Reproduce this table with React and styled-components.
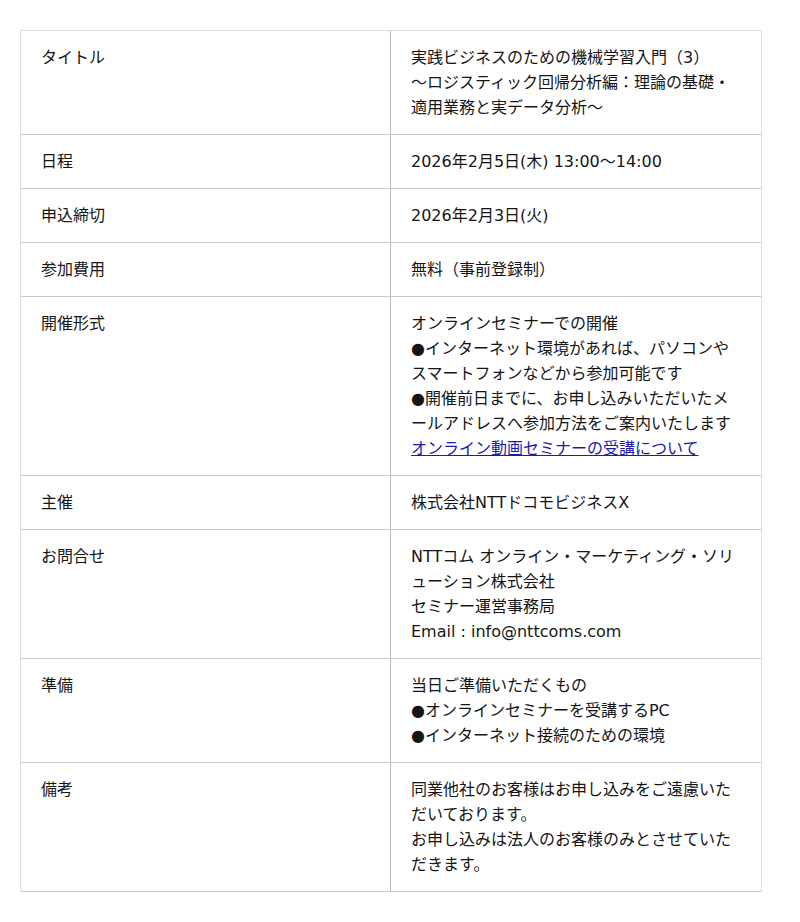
import React from "react"
import styled, { createGlobalStyle } from "styled-components"

const rows = [
  {
    label: "タイトル",
    lines: [
      "実践ビジネスのための機械学習入門（3）",
      "〜ロジスティック回帰分析編：理論の基礎・適用業務と実データ分析〜",
    ],
  },
  { label: "日程", lines: ["2026年2月5日(木) 13:00〜14:00"] },
  { label: "申込締切", lines: ["2026年2月3日(火)"] },
  { label: "参加費用", lines: ["無料（事前登録制）"] },
  {
    label: "開催形式",
    lines: [
      "オンラインセミナーでの開催",
      "●インターネット環境があれば、パソコンやスマートフォンなどから参加可能です",
      "●開催前日までに、お申し込みいただいたメールアドレスへ参加方法をご案内いたします",
    ],
    link: "オンライン動画セミナーの受講について",
  },
  { label: "主催", lines: ["株式会社NTTドコモビジネスX"] },
  {
    label: "お問合せ",
    lines: [
      "NTTコム オンライン・マーケティング・ソリューション株式会社",
      "セミナー運営事務局",
      "Email : info@nttcoms.com",
    ],
  },
  {
    label: "準備",
    lines: [
      "当日ご準備いただくもの",
      "●オンラインセミナーを受講するPC",
      "●インターネット接続のための環境",
    ],
  },
  {
    label: "備考",
    lines: [
      "同業他社のお客様はお申し込みをご遠慮いただいております。",
      "お申し込みは法人のお客様のみとさせていただきます。",
    ],
  },
]

export default function App() {
  return (
    <Page>
      <GlobalStyle />
      <Table>
        {rows.map((row) => (
          <Row key={row.label}>
            <Label>{row.label}</Label>
            <Value>
              {row.lines.map((line) => (
                <Line key={line}>{line}</Line>
              ))}
              {row.link && <Link href="#">{row.link}</Link>}
            </Value>
          </Row>
        ))}
      </Table>
    </Page>
  )
}

const GlobalStyle = createGlobalStyle`
  body {
    margin: 0;
    background: #fff;
    font-family: "DejaVu Sans", "Noto Sans CJK JP", sans-serif;
  }
`

const Page = styled.div`
  padding: 30px 20px;
`

const Table = styled.div`
  width: 742px;
  border: 1px solid #dedede;
  border-bottom: none;
  box-sizing: border-box;
`

const Row = styled.div`
  display: grid;
  grid-template-columns: 370px 1fr;
  border-bottom: 1px solid #cbcbcb;
`

const Cell = styled.div`
  padding: 14px 20px;
  font-size: 16px;
  line-height: 25px;
  color: #151515;
`

const Label = styled(Cell)`
  border-right: 1px solid #b9b9b9;
`

const Value = styled(Cell)`
  padding-right: 18px;
`

const Line = styled.div``

const Link = styled.a`
  display: block;
  color: #1a1ab0;
  text-decoration: underline;
`
